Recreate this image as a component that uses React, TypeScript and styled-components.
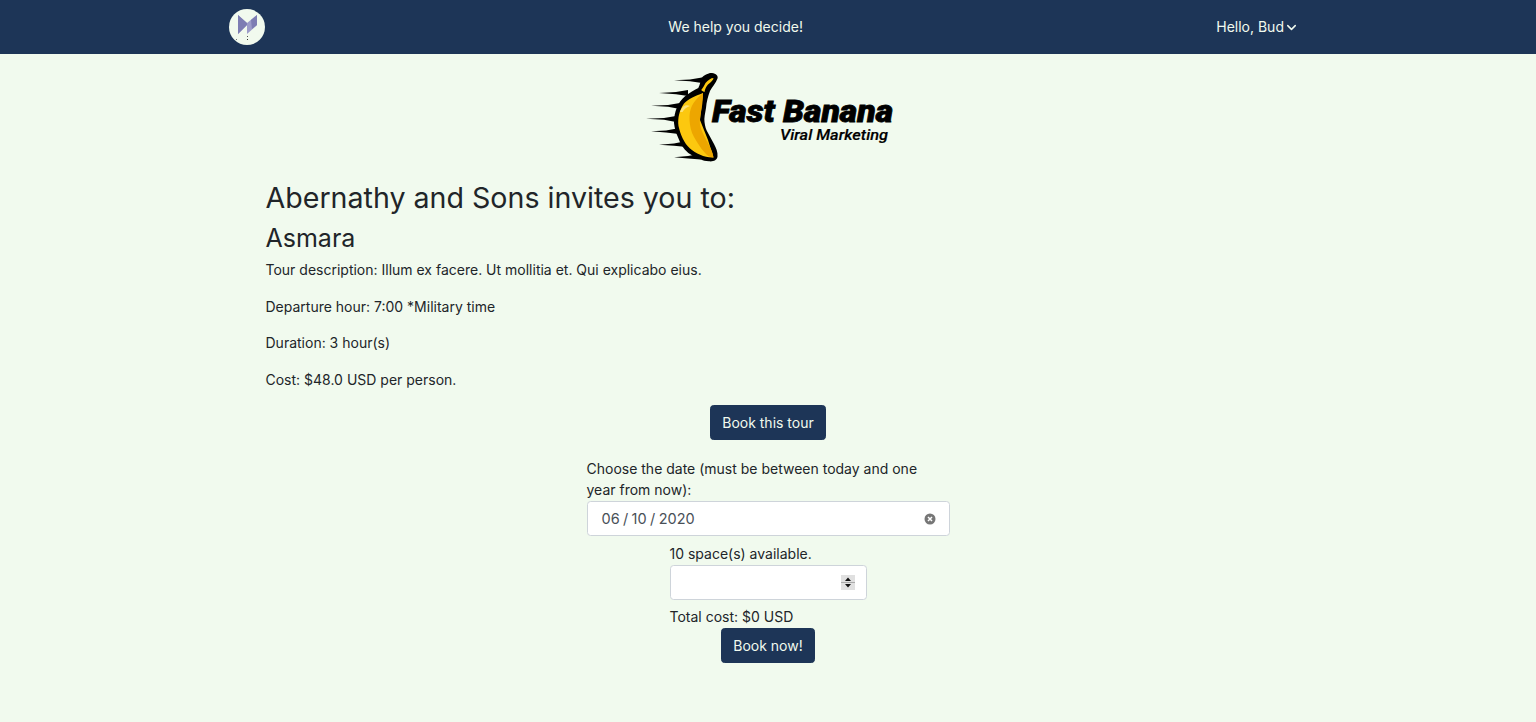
import styled, { createGlobalStyle } from "styled-components";
import { ChevronDown } from "lucide-react";

const GlobalStyle = createGlobalStyle`
  html {
    font-size: 14px;
  }

  body {
    margin: 0;
    background-color: #f1faee;
    color: #212529;
    font-family: Inter, Roboto, "Liberation Sans", sans-serif;
    font-size: 14px;
    line-height: 21.9px;
  }
`;

const Navbar = styled.nav`
  height: 54px;
  padding: 0 237px 0 229px;
  display: flex;
  align-items: center;
  justify-content: space-between;
  background-color: #1d3557;
  color: #f1faee;
`;

const NavLogo = styled.div`
  width: 36px;
  height: 36px;
  border-radius: 50%;
  background-color: #f1faee;
  display: flex;
  align-items: center;
  justify-content: center;
`;

const UserMenu = styled.div`
  padding-left: 10px;
  display: flex;
  align-items: center;
`;

const LogoRow = styled.div`
  padding-top: 6px;
  display: flex;
  justify-content: center;
`;

const Logo = styled.svg`
  margin-left: 4px;
`;

const Details = styled.section`
  width: 1005px;
  margin: 0 auto;
  padding-top: 11px;
`;

const Title = styled.h3`
  margin: 0 0 8px;
  font-size: 28.6px;
  font-weight: 400;
  line-height: 1.2;
`;

const TourName = styled.h4`
  margin: 0 0 5.8px;
  font-size: 25px;
  font-weight: 400;
  line-height: 1.2;
`;

const Info = styled.p`
  margin: 0 0 14.6px;
`;

const Booking = styled.section`
  display: flex;
  flex-direction: column;
  align-items: center;
`;

const Button = styled.button`
  padding: 5.5px 11.7px;
  border: 1px solid #1d3557;
  border-radius: 3.6px;
  background-color: #1d3557;
  color: #f1faee;
  font: inherit;
`;

const DateField = styled.div`
  width: 363px;
  margin-top: 17.5px;
`;

const SpacesField = styled.div`
  width: 197px;
  margin-top: 7px;
`;

const Label = styled.label`
  display: block;
`;

const InputBox = styled.div<{ $endPadding: number }>`
  height: 35px;
  box-sizing: border-box;
  padding: 0 ${(p) => p.$endPadding}px 0 14px;
  display: flex;
  align-items: center;
  justify-content: space-between;
  border: 1px solid #ced4da;
  border-radius: 3.6px;
  background-color: #fff;
  color: #495057;
`;

const DateValue = styled.span`
  font-size: 14.5px;
  word-spacing: -0.7px;
`;

const Spacer = styled.span``;

const Total = styled.div`
  margin-top: 6px;
`;

const BananaLogo = () => (
  <Logo width="280" height="110" viewBox="0 0 280 110">
    <g fill="#000">
      <path d="M44 20.300 L60 19.500 L72 17.500 L72 23 L60 21.300 Z" />
      <path d="M29 33 L46 32 L58 30 L58 36 L46 34.200 Z" />
      <path d="M21 45.700 L38 45 L50 43 L50 49 L38 46.800 Z" />
      <path d="M16 58.700 L34 58 L46 56 L46 62 L34 59.800 Z" />
      <path d="M21 71.300 L36 70.500 L47 68.500 L49 74 L36 72.500 Z" />
      <path d="M29 84.700 L44 83.500 L54 81.500 L57 87 L44 85.800 Z" />
      <path d="M44 97.300 L58 96 L66 94.500 L71 99.500 L58 98.500 Z" />
    </g>
    <path
      d="M71.500 18 C74 15 79 12.500 82 13 C86 13.500 88.500 16 87.500 18.500 C86 23 82 27 80 31 C78 36 76.500 42 76 48 C75 54 74 58 74.500 62 C75 66 76 70 78 73 C80 77 82 80 84 84 C86 88 88 92 87.500 96.500 C87 100.500 83 101.800 79 101.300 C75 101 73 100.500 71.500 99.700 C66 98 62 95.500 58.300 93 C53 88.500 50 83 48.300 78 C46 73 44.500 68 44 63 C44 57 45 52 46.700 48 C48.500 43 51.500 39.500 55 36.300 C59 33 64 30 68.300 28 C70 25 70.500 21 71.500 18 Z"
      fill="#000"
    />
    <path
      d="M75.500 23 C78 20 81 18 83.500 18 C83.500 20 81 22 78 24.500 C76 27 75 29 74.500 32 C71 30.500 71 30 72 29 C73.500 27 74.500 25 75.500 23 Z"
      fill="#fcc80f"
    />
    <path
      d="M73 33 C65 36 58 39 54 43.500 C49.500 50 47.500 58 48.500 66 C50.500 75 54 83 60 88.500 C66 93.500 75 98 83.500 97.500 L78 80 L70 60 Z"
      fill="#fcc80f"
    />
    <path
      d="M73 33 C73 40 72 47 71 52 C70 57 69.500 61 70 65 C71 70 74 76 78 83 C80 87 83 92 83.500 97.500 C80 97 78 96 77 95 C73 91 70 87 67 82 C63 76 60.500 70 60 64.700 C59 58 59.500 53 60.500 49.700 C62.500 43 67 38 73 33 Z"
      fill="#eda600"
    />
    <path d="M50 52 C52 47 55 44 60 46 C57 47 54 49 52.500 52 Z" fill="#fde27a" />
    <text x="82" y="62" fontFamily="Roboto, sans-serif" fontSize="31" fontWeight="900" fontStyle="italic" textLength="181" lengthAdjust="spacingAndGlyphs" fill="#000" stroke="#000" strokeWidth="0.8">
      Fast Banana
    </text>
    <text x="150" y="80" fontFamily="Roboto, sans-serif" fontSize="15.5" fontWeight="500" fontStyle="italic" textLength="108" lengthAdjust="spacingAndGlyphs" fill="#000" stroke="#000" strokeWidth="0.2">
      Viral Marketing
    </text>
  </Logo>
);

const NavMark = () => (
  <svg width="36" height="36" viewBox="0 0 36 36">
    <path d="M9 6 L18 14 L28 6 V16 L18 25 V16 L9 25 Z" fill="#9c9cc9" />
    <path d="M9 6 L18 14 V16 L9 25 Z" fill="#7d7db3" />
    <path d="M28 6 V16 L23 20 L22 11 Z" fill="#7d7db3" />
    <rect x="18" y="27" width="1" height="1" fill="#555" />
    <rect x="18" y="30" width="1" height="1" fill="#333" />
    <rect x="7" y="30" width="1" height="1" fill="#777" />
  </svg>
);

const ClearIcon = () => (
  <svg width="12" height="12" viewBox="0 0 12 12">
    <circle cx="6" cy="6" r="5.500" fill="#767676" />
    <path d="M4 4 L8 8 M8 4 L4 8" stroke="#fff" strokeWidth="1.500" />
  </svg>
);

const SpinIcon = () => (
  <svg width="14" height="15" viewBox="0 0 14 15">
    <rect width="14" height="15" fill="#e0e0e0" />
    <rect y="7" width="14" height="1" fill="#aaa" />
    <path d="M7 2.500 L10 6 H4 Z M7 12.500 L4 9 H10 Z" fill="#111" />
  </svg>
);

export default function App() {
  return (
    <>
      <GlobalStyle />
      <Navbar>
        <NavLogo>
          <NavMark />
        </NavLogo>
        <span>We help you decide!</span>
        <UserMenu>
          Hello, Bud
          <ChevronDown size={15} strokeWidth={2.4} />
        </UserMenu>
      </Navbar>
      <LogoRow>
        <BananaLogo />
      </LogoRow>
      <Details>
        <Title>Abernathy and Sons invites you to:</Title>
        <TourName>Asmara</TourName>
        <Info>Tour description: Illum ex facere. Ut mollitia et. Qui explicabo eius.</Info>
        <Info>Departure hour: 7:00 *Military time</Info>
        <Info>Duration: 3 hour(s)</Info>
        <Info>Cost: $48.0 USD per person.</Info>
      </Details>
      <Booking>
        <Button>Book this tour</Button>
        <DateField>
          <Label>Choose the date (must be between today and one year from now):</Label>
          <InputBox $endPadding={13}>
            <DateValue>06 / 10 / 2020</DateValue>
            <ClearIcon />
          </InputBox>
        </DateField>
        <SpacesField>
          <Label>10 space(s) available.</Label>
          <InputBox $endPadding={11}>
            <Spacer />
            <SpinIcon />
          </InputBox>
          <Total>Total cost: $0 USD</Total>
        </SpacesField>
        <Button>Book now!</Button>
      </Booking>
    </>
  );
}
